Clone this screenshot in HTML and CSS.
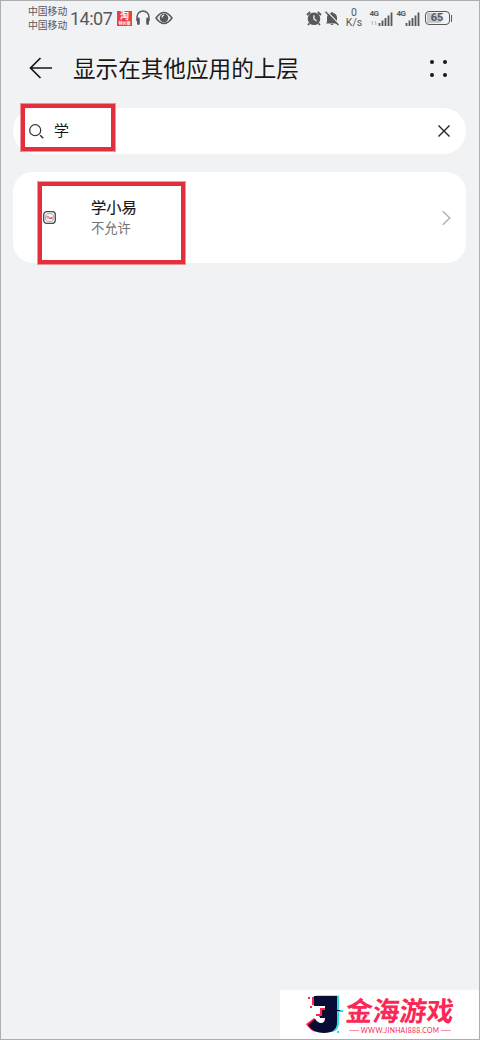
FILE: index.html
```html
<!DOCTYPE html>
<html lang="zh-CN">
<head>
<meta charset="utf-8">
<title>显示在其他应用的上层</title>
<link rel="stylesheet" href="styles.css">
</head>
<body>
<main class="screen">
  <div class="status">
    <div class="carriers"><span>中国移动</span><span>中国移动</span></div>
    <span class="clock">14:07</span>
    <span class="app-badge"><b>淘</b><i>特价版</i></span>
    <svg class="headset" width="14" height="16" viewBox="0 0 14 16" fill="none" stroke="#57585a" stroke-width="1.5"><path d="M1 11V7a6 6 0 0 1 12 0v4"/><path d="M2.4 9v4.5M11.600 9v4.500" stroke-width="2.800" stroke-linecap="round"/></svg>
    <svg class="eye" width="18" height="14" viewBox="0 0 18 14" fill="none" stroke="#57585a" stroke-width="1.500"><path d="M1 7Q9-4 17 7Q9 18 1 7Z"/><circle cx="9" cy="7" r="4.300" fill="#57585a" stroke="none"/><path d="M7 6.500q0-2 2-2.300" stroke="#f1f2f4" stroke-width="1.300"/></svg>
    <div class="status-right">
      <svg width="16" height="15" viewBox="0 0 16 15"><circle cx="8" cy="7.800" r="6.300" fill="#57585a"/><path d="M1 4 4.200 1M15 4 11.800 1M3.400 12.400 2 14M12.600 12.400 14 14" stroke="#57585a" stroke-width="1.800"/><path d="M8 4.200V8l2.500 2" fill="none" stroke="#f1f2f4" stroke-width="1.300"/></svg>
      <svg class="bell" width="14" height="15" viewBox="0 0 14 15"><path d="M2 11V7a5 5 0 0 1 3.800-5q1.200-1.800 2.400 0A5 5 0 0 1 12 7v4l1 1.500H1ZM5.300 13h3.400q-1.700 2-3.400 0Z" fill="#57585a"/><path d="M1.500 0 14 13" stroke="#f1f2f4" stroke-width="1.400"/><path d="M.5.800 13.500 14" stroke="#57585a" stroke-width="1.400"/></svg>
      <div class="speed"><span>0</span><span>K/s</span></div>
      <div class="signal"><span>4G</span><svg width="24" height="15" viewBox="0 0 24 15"><path d="M2.500 14v-4M1 11.500 2.500 10M5.500 10v4L7 12.500" fill="none" stroke="#c2c2c4"/><path d="M9.500 12v3M12.500 9.500V15M15.500 7v8M18.500 4.500V15M21.500 1.500V15" stroke="#57585a" stroke-width="1.800"/></svg></div>
      <div class="signal second"><span>4G</span><svg width="24" height="15" viewBox="0 0 24 15"><path d="M9.500 12v3M12.500 9.500V15M15.500 7v8M18.500 4.500V15M21.500 1.500V15" stroke="#57585a" stroke-width="1.800"/></svg></div>
      <div class="battery"><span>65</span></div><i class="battery-tip"></i>
    </div>
  </div>

  <header class="header">
    <svg width="24" height="22" viewBox="0 0 24 22" fill="none" stroke="#171717" stroke-width="1.700"><path d="M23 11H1.500M11.500 1 1.500 11l10 10"/></svg>
    <h1>显示在其他应用的上层</h1>
    <div class="more"><i></i><i></i><i></i><i></i></div>
  </header>

  <div class="search">
    <svg width="15" height="15" viewBox="0 0 15 15" fill="none" stroke="#333" stroke-width="1.200"><circle cx="6.200" cy="6.200" r="5.500"/><path d="m11.200 11.200 3 3" stroke-width="1.500"/></svg>
    <span>学</span>
    <svg class="clear" width="12" height="12" viewBox="0 0 12 12" stroke="#222" stroke-width="1.400"><path d="m.5.500 11 11M11.500.500l-11 11"/></svg>
    <div class="mark mark-search"></div>
  </div>

  <section class="card">
    <svg class="app-icon" width="13" height="13" viewBox="0 0 13 13"><rect x=".7" y=".7" width="11.600" height="11.600" rx="3" fill="#fff" stroke="#444950" stroke-width="1.300"/><rect x="2.700" y="2.700" width="7.600" height="7.600" rx="2" fill="#fff" stroke="#8a8a8e" stroke-width=".800"/><path d="M3.500 5.300h2l1.500 2 2.500-1.300M3.500 7h2l1 .5h3" fill="none" stroke="#e84b57" stroke-width=".900"/></svg>
    <div class="app-text"><strong>学小易</strong><span>不允许</span></div>
    <svg class="chevron" width="9" height="16" viewBox="0 0 9 16" fill="none" stroke="#b2b2b4" stroke-width="1.500"><path d="m.8 1.200 7 6.800-7 6.800"/></svg>
    <div class="mark mark-app"></div>
  </section>

  <aside class="brand">
    <svg width="38" height="42" viewBox="0 0 38 42">
      <path d="M11 .5h23V15h4v2h-4v12q-1 7-7 8h-4l7-14V4H11Z" fill="#27dce4"/>
      <path d="M7 2h4v8H7ZM3 2h2v2H3ZM5 11h2v2H5ZM1 29l8-6 2 2-6 5q3 5 7 7-7-1-11-8ZM15 13h6v9h-7v-1h-3v-2h4Z" fill="#ff244f"/>
      <path d="M9 1h23v14h3v1h-3v11q0 11-13 11Q8 38 3 30l7-6q3 4 6 4 4 0 4-5h-5v-2h2v-6h3v-4H9Z" fill="#080c35"/>
      <path d="M32 36h2v2h-2ZM30 34h1v1h-1Z" fill="#27dce4"/>
    </svg>
    <div class="brand-text"><b>金海游戏</b><small>WWW.JINHAI888.COM</small></div>
  </aside>
</main>
</body>
</html>
```
FILE: styles.css
```css
* { box-sizing: border-box; }
body { margin: 0; font-family: "Noto Sans CJK SC", sans-serif; color: #171717; }
svg { display: block; flex: none; }
i { font-style: normal; }
.screen { position: relative; width: 480px; height: 1040px; overflow: hidden; background: #f1f2f4; border: 1px solid #adaeb0; }

.status { display: flex; align-items: center; height: 34px; padding: 0 27px; color: #57585a; }
.carriers { display: flex; flex-direction: column; width: 42px; font-size: 9.800px; line-height: 14px; white-space: nowrap; }
.clock { width: 47px; padding-top: 1px; font: 18px/22px Roboto, sans-serif; letter-spacing: -.5px; }
.app-badge { display: flex; flex-direction: column; align-items: center; width: 15px; height: 15px; background: #ed3c43; color: #fff; }
.app-badge b { font-size: 9px; line-height: 10px; }
.app-badge i { font-size: 4px; line-height: 5px; font-weight: 700; }
.headset { margin-left: 4px; }
.eye { margin-left: 5px; }
.status-right { display: flex; align-items: center; margin-left: auto; }
.status-right > :first-child { margin-left: -1px; }
.bell { margin-left: 3px; }
.speed { display: flex; flex-direction: column; align-items: center; width: 17px; margin-left: 7px; font: 10.500px/10px Roboto, sans-serif; }
.signal { display: flex; position: relative; margin-left: 7px; }
.signal span { position: absolute; left: 0; top: -1px; font: 700 8px/8px Roboto, sans-serif; letter-spacing: -.5px; }
.signal.second { margin-left: 3px; }
.battery { display: flex; width: 25px; height: 14px; margin-left: 4px; border: 1.500px solid #57585a; border-radius: 4px; padding: 1px; }
.battery span { width: 21px; background: linear-gradient(90deg, #c7c8ca 65%, transparent 65%); font: 700 11px/10px Roboto, sans-serif; text-align: center; }
.battery-tip { width: 1.500px; height: 7px; margin-left: 1px; background: #57585a; }

.header { display: flex; align-items: center; height: 66px; padding: 0 32px 0 28px; }
.header h1 { margin: 0 0 0 20px; font-size: 22.600px; line-height: 32px; font-weight: 400; white-space: nowrap; }
.more { display: grid; grid-template-columns: 4px 4px; gap: 9px; margin-left: auto; }
.more i { width: 4px; height: 4px; border-radius: 50%; background: #171717; }

.search { position: relative; display: flex; align-items: center; height: 46px; margin: 7px 13px 0 12px; padding: 0 16px; background: #fff; border-radius: 23px; }
.search span { margin: -2px 0 0 10px; font-size: 15px; line-height: 22px; }
.clear { margin-left: auto; }
.card { position: relative; display: flex; align-items: center; height: 91px; margin: 18px 13px 0 12px; padding: 0 15px 0 30px; background: #fff; border-radius: 20px; }
.app-text { display: flex; flex-direction: column; margin: -2px 0 0 35px; }
.app-text strong { font-size: 15.300px; line-height: 23px; font-weight: 400; -webkit-text-stroke: .2px #171717; }
.app-text span { font-size: 13.300px; line-height: 20px; color: #737373; }
.chevron { margin-left: auto; }
.mark { position: absolute; border: 4px solid #e22e3d; outline: 1px solid #e22e3d80; }
.mark-search { left: 8px; top: -4px; width: 94px; height: 47px; }
.mark-app { left: 25px; top: 10px; width: 147px; height: 82px; }

.brand { position: absolute; right: -1px; bottom: -1px; display: flex; width: 200px; height: 50px; padding: 5px 0 0 25px; background: #fff; }
.brand-text { display: flex; flex-direction: column; align-items: center; width: 110px; margin-left: 2px; color: #fb2855; }
.brand-text b { font-size: 27px; line-height: 31px; font-weight: 700; white-space: nowrap; transform: translateY(-1px) skewX(-6deg); }
.brand-text small { display: flex; align-items: center; gap: 2px; font: 6.800px/9px Lato, sans-serif; letter-spacing: .3px; white-space: nowrap; }
.brand-text small::before, .brand-text small::after { content: ""; width: 10px; height: 1px; background: #ff91a9; }
```
